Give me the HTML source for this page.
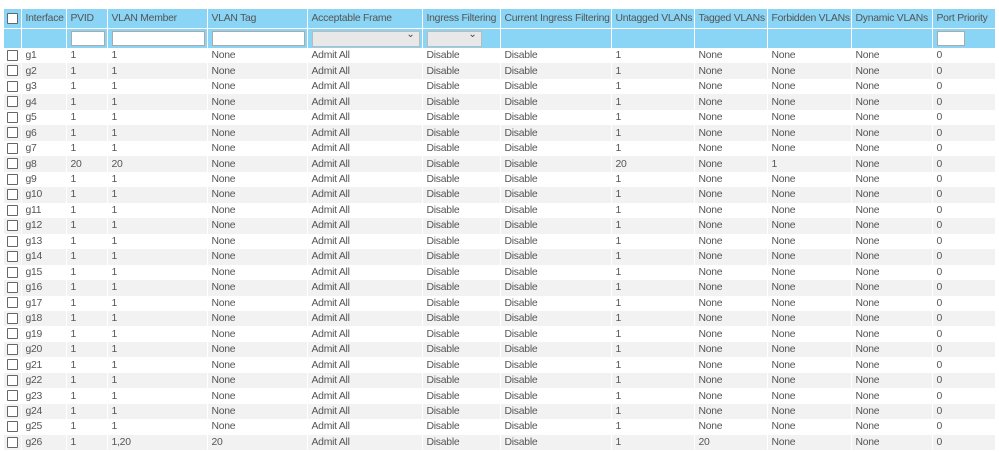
<!DOCTYPE html>
<html><head><style>
body{margin:0;background:#fff;font-family:"Liberation Sans",sans-serif;font-size:10.4px;letter-spacing:-0.25px;color:#555;}
table{position:absolute;left:4px;top:9px;width:991px;border-collapse:collapse;table-layout:fixed;}
td,th{padding:0 0 0 4px;white-space:nowrap;overflow:hidden;border-left:1px solid #fff;text-align:left;font-weight:normal;}
th{background:#8ad4f5;height:19px;color:#555;}
tr.f td{background:#8ad4f5;height:19px;border-top:1px solid #fff;}
tr.d td{height:15.48px;padding-top:0;padding-bottom:0;line-height:15px;}
tr.g td{background:#f2f2f2;}
.cb{display:inline-block;width:9px;height:9px;border:1px solid #666;border-radius:1px;background:#fff;vertical-align:middle;}
td:first-child,th:first-child{padding-left:3px;border-left:none;}
.in{display:block;height:15px;border:1px solid #aaa;background:#fff;box-sizing:border-box;}
.sel{display:block;height:16px;border:1px solid #bbb;background:#e8e8e8;box-sizing:border-box;position:relative;}
.sel:after{content:"⌄";position:absolute;right:4px;top:-3px;font-size:10px;color:#444;}
</style></head><body>
<table>
<colgroup><col style="width:17px"><col style="width:45px"><col style="width:41px"><col style="width:100px"><col style="width:100px"><col style="width:115px"><col style="width:78px"><col style="width:111px"><col style="width:83px"><col style="width:73px"><col style="width:84px"><col style="width:81px"><col style="width:63px"></colgroup>
<thead><tr><th><span class="cb"></span></th><th>Interface</th><th>PVID</th><th>VLAN Member</th><th>VLAN Tag</th><th>Acceptable Frame</th><th>Ingress Filtering</th><th>Current Ingress Filtering</th><th>Untagged VLANs</th><th>Tagged VLANs</th><th>Forbidden VLANs</th><th>Dynamic VLANs</th><th>Port Priority</th></tr></thead>
<tbody id="tb">
<tr class="f"><td></td><td></td><td style="padding-right:2px"><span class="in"></span></td><td style="padding-right:2px"><span class="in"></span></td><td style="padding-right:2px"><span class="in"></span></td><td style="padding-right:2px"><span class="sel"></span></td><td style="padding-right:18px"><span class="sel"></span></td><td></td><td></td><td></td><td></td><td></td><td style="padding-right:30px"><span class="in"></span></td></tr>
</tbody></table>
<script>
var h='';
for(let i=1;i<=26;i++){
 let p=i==8?'20':'1',m=i==8?'20':(i==26?'1,20':'1'),t=i==26?'20':'None',u=i==8?'20':'1',tg=i==26?'20':'None',fb=i==8?'1':'None';
 h+='<tr class="d'+(i%2==0?' g':'')+'"><td><span class="cb"></span></td><td>g'+i+'</td><td>'+p+'</td><td>'+m+'</td><td>'+t+'</td><td>Admit All</td><td>Disable</td><td>Disable</td><td>'+u+'</td><td>'+tg+'</td><td>'+fb+'</td><td>None</td><td>0</td></tr>';
}
document.getElementById('tb').insertAdjacentHTML('beforeend',h);
</script>
</body></html>
